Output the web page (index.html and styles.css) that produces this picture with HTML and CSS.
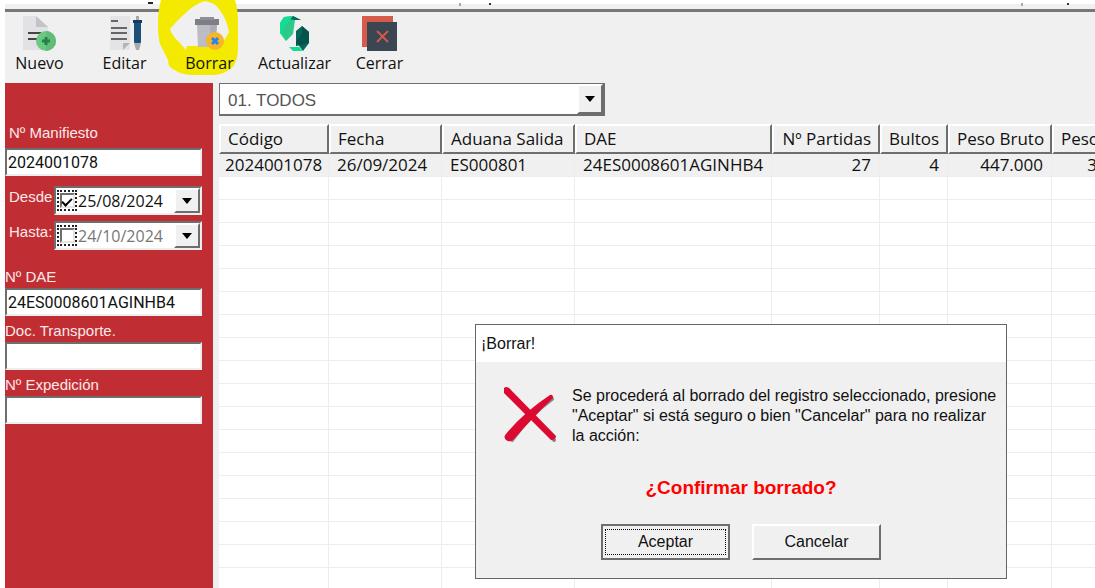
FILE: index.html
```
<!DOCTYPE html>
<html lang="es">
<head>
    <meta charset="UTF-8" />
    <meta name="viewport" content="width=device-width, initial-scale=1.0" />
    <title>Manifiestos</title>
    <link rel="stylesheet" href="styles.css">
</head>
<body>
    <div class="window">
        <svg class="menu-edge" height="9">
            <path d="M143 3h5" stroke="#222" stroke-width="2"/>
            <path d="M455 3v3M1017 3v3" stroke="#aaa" stroke-width="2"/>
            <path d="M485 3v2M1063 3v2" stroke="#334" stroke-width="2"/>
        </svg>

        <nav class="toolbar">
            <button type="button" class="tool">
                <svg width="36" height="36" viewBox="0 0 36 36">
                    <path d="M1 0h13l12 11v23H1z" fill="#e2e2e4"/>
                    <path d="M14 0l12 11H14z" fill="#c3c3c8"/>
                    <path d="M6 17h13M6 23h11" stroke="#444" stroke-width="2"/>
                    <circle cx="24" cy="25" r="10" fill="#6cc983"/>
                    <path d="M24 15a10 10 0 0 1 0 20z" fill="#62bb78"/>
                    <path d="M24 21v8M20 25h8" stroke="#23834a" stroke-width="3"/>
                </svg>
                <span>Nuevo</span>
            </button>
            <button type="button" class="tool">
                <svg width="36" height="36" viewBox="0 0 36 36">
                    <path d="M3 0h20v34H3z" fill="#e4e4e6"/>
                    <path d="M16 27h7l-7 7z" fill="#b4b4b8"/>
                    <path d="M4 5h7M4 12h16M4 17h16M4 23h16" stroke="#666" stroke-width="2"/>
                    <path d="M29 0h3v4h-3zM27 27h7l-2 7h-3z" fill="#aaa"/>
                    <rect x="27" y="4" width="7" height="23" rx="1" fill="#1d5078"/>
                    <path d="M26 4h9v3h-9z" fill="#133c5e"/>
                </svg>
                <span>Editar</span>
            </button>
            <button type="button" class="tool">
                <svg class="marker" width="82" height="78" viewBox="0 0 82 78">
                    <path fill="#f3ea00" d="M4 0H78Q81 10 81 22V48Q81 64 73 69Q66 75 54 75H34Q22 74 18 70Q11 68 11 60L3 44Q1 36 1 24Q1 10 4 0Z"/>
                    <path fill="#f0f0f0" d="M48 1Q41 3 33 9L21 20L13 29Q15 36 22 42L29 50L30 46H60L66 42L71 34L72 32Q70 22 66 15Q60 5 55 3Z"/>
                </svg>
                <svg width="36" height="36" viewBox="0 0 36 36">
                    <path d="M3 3h24v6H3z" fill="#7e7e86"/>
                    <path d="M8 1h14v3H8z" fill="#8e8e96"/>
                    <path d="M5 9h20l-2 22H6z" fill="#bcbcc5"/>
                    <path d="M18 9h7l-2 22h-5z" fill="#adadb7"/>
                    <circle cx="23" cy="25" r="9" fill="#f7b52c"/>
                    <path d="M20 22l6 6M26 22l-6 6" stroke="#2687e8" stroke-width="3"/>
                </svg>
                <span>Borrar</span>
            </button>
            <button type="button" class="tool">
                <svg width="36" height="36" viewBox="0 0 36 36">
                    <path d="M3 7L7 1L16 0L24 4H18L16 18L9 25L3 17Z" fill="#2cc98a"/>
                    <path d="M16 0L24 4H18L12 3Z" fill="#07665a"/>
                    <path d="M3 7L7 1L16 0L5 14L9 25L3 17Z" fill="#13dd95"/>
                    <path d="M25 10L32 16V27L26 35L19 26V15Z" fill="#07665a"/>
                    <path d="M25 10L32 16V27L19 30V26L25 18Z" fill="#04544e"/>
                    <path d="M12 31H22L26 35H16Z" fill="#13dd95"/>
                </svg>
                <span>Actualizar</span>
            </button>
            <button type="button" class="tool">
                <svg width="36" height="36" viewBox="0 0 36 36">
                    <path d="M0 0h31v31H0z" fill="#d65b4b"/>
                    <path d="M5 6h30v29H5z" fill="#3a4652"/>
                    <path d="M15 15l11 11M26 15L15 26" stroke="#cf5a4c" stroke-width="2"/>
                </svg>
                <span>Cerrar</span>
            </button>
        </nav>

        <div class="content">
            <form class="filters">
                <label for="manifiesto" class="inset">Nº Manifiesto</label>
                <input type="text" id="manifiesto" class="field" value="2024001078" />

                <div class="date-row">
                    <label for="desde">Desde</label>
                    <div class="date-box">
                        <span class="tick"><input type="checkbox" aria-label="Usar desde" checked /></span>
                        <input type="text" id="desde" value="25/08/2024" />
                        <button type="button" class="drop" aria-label="Abrir calendario"></button>
                    </div>
                </div>
                <div class="date-row off">
                    <label for="hasta">Hasta:</label>
                    <div class="date-box">
                        <span class="tick"><input type="checkbox" aria-label="Usar hasta" /></span>
                        <input type="text" id="hasta" value="24/10/2024" />
                        <button type="button" class="drop" aria-label="Abrir calendario"></button>
                    </div>
                </div>

                <label for="dae" class="spaced">Nº DAE</label>
                <input type="text" id="dae" class="field" value="24ES0008601AGINHB4" />
                <label for="transporte">Doc. Transporte.</label>
                <input type="text" id="transporte" class="field" />
                <label for="expedicion">Nº Expedición</label>
                <input type="text" id="expedicion" class="field" />
            </form>

            <main class="list">
                <div class="combo">
                    <select aria-label="Estado">
                        <option>01. TODOS</option>
                    </select>
                    <span class="drop"></span>
                </div>

                <div class="grid">
                    <table>
                        <colgroup>
                            <col class="c-codigo"><col class="c-fecha"><col class="c-aduana"><col class="c-dae">
                            <col class="c-partidas"><col class="c-bultos"><col class="c-bruto"><col class="c-neto">
                        </colgroup>
                        <thead>
                            <tr>
                                <th>Código</th>
                                <th>Fecha</th>
                                <th>Aduana Salida</th>
                                <th>DAE</th>
                                <th class="num">Nº Partidas</th>
                                <th class="num">Bultos</th>
                                <th class="num">Peso Bruto</th>
                                <th>Peso Neto</th>
                            </tr>
                        </thead>
                        <tbody id="rows">
                            <tr class="selected">
                                <td>2024001078</td>
                                <td>26/09/2024</td>
                                <td>ES000801</td>
                                <td>24ES0008601AGINHB4</td>
                                <td class="num">27</td>
                                <td class="num">4</td>
                                <td class="num">447.000</td>
                                <td class="num">312.000</td>
                            </tr>
                        </tbody>
                    </table>
                </div>
            </main>
        </div>

        <div class="dialog" role="dialog" aria-labelledby="dialog-title">
            <h2 id="dialog-title">¡Borrar!</h2>
            <div class="message">
                <svg width="56" height="58" viewBox="0 0 56 58">
                    <path d="M7 6L52 54M50 13Q28 29 10 54" stroke="#888" stroke-width="4" stroke-linecap="round" fill="none"/>
                    <path d="M2 2Q5 -1 9 4L54 50Q54 54 49 54L2 7Z" fill="#dc0a32"/>
                    <path d="M48 9Q51 8 51 12Q34 28 12 53Q8 57 4 54Q1 51 4 48Q22 26 48 9Z" fill="#dc0a32"/>
                </svg>
                <p>Se procederá al borrado del registro seleccionado, presione "Aceptar" si está seguro o bien "Cancelar" para no realizar la acción:</p>
            </div>
            <p class="confirm">¿Confirmar borrado?</p>
            <div class="actions">
                <button type="button" class="default"><span>Aceptar</span></button>
                <button type="button"><span>Cancelar</span></button>
            </div>
        </div>
    </div>

    <script>
        // fill the rest of the grid with empty rows
        const rows = document.getElementById("rows");
        for (let i = 0; i < 40; i++) {
            const tr = rows.insertRow();
            for (let c = 0; c < 8; c++) tr.insertCell();
        }
    </script>
</body>
</html>
```
FILE: styles.css
```
:root {
  --face: #f0f0f0;
  --shadow: #6e6e6e;
  --red: #c02e33;
  --line: #ededed;
}

* {
  box-sizing: border-box;
}

body {
  margin: 0;
  background: #fff;
  color: #111;
  font-family: "Liberation Sans", Arial, sans-serif;
  overflow: hidden;
}

.window {
  position: relative;
  height: 100vh;
  margin-left: 5px;
  display: flex;
  flex-direction: column;
  background: var(--face);
}

.menu-edge {
  width: 100%;
  flex: none;
  background: linear-gradient(#fff 4px, #f0f0f0 4px);
}

/* toolbar */
.toolbar {
  height: 74px;
  flex: none;
  display: flex;
  align-items: flex-start;
  border-top: 3px solid #777;
  padding-top: 4px;
}

.tool {
  position: relative;
  width: 85px;
  padding: 0;
  border: 0;
  background: none;
  display: flex;
  flex-direction: column;
  align-items: center;
  font: 16px/22px "Open Sans", sans-serif;
  color: #111;
}

.tool:first-child {
  margin-left: -8px;
}

.tool svg,
.tool span {
  position: relative;
}

/* highlighter stroke behind the delete button */
.tool .marker {
  position: absolute;
  left: -10px;
  top: -16px;
}

.content {
  flex: 1;
  min-height: 0;
  display: flex;
}

/* search filters */
.filters {
  width: 208px;
  flex: none;
  padding-top: 39px;
  background: var(--red);
  color: #fbe9e9;
  font-size: 15px;
}

.filters label {
  display: block;
  line-height: 22px;
}

.filters .inset {
  padding: 0 0 4px 4px;
}

.filters .spaced {
  margin-top: 16px;
}

.field {
  display: block;
  width: 197px;
  height: 28px;
  margin-bottom: 4px;
  padding: 0 1px;
  border: 2px solid;
  border-color: var(--shadow) #eee #eee var(--shadow);
  background: #fff;
  font: 16px Roboto, sans-serif;
  color: #111;
}

.date-row {
  display: flex;
  padding-left: 4px;
  margin-top: 10px;
}

.date-row.off {
  margin-top: 6px;
}

.date-row label {
  width: 45px;
  white-space: nowrap;
}

.date-box {
  display: flex;
  align-items: center;
  width: 148px;
  height: 29px;
  border: 2px solid;
  border-color: var(--shadow) #eee #eee var(--shadow);
  background: #fff;
}

.date-box input[type="text"] {
  flex: 1;
  min-width: 0;
  padding: 0;
  border: 0;
  background: none;
  font: 16px "Open Sans", sans-serif;
  color: #111;
}

.date-row.off input[type="text"] {
  color: #777;
}

.tick {
  display: flex;
  align-items: center;
  justify-content: center;
  width: 20px;
  height: 21px;
  margin: 0 1px;
  border: 2px dotted #222;
}

.tick input {
  appearance: none;
  display: flex;
  align-items: center;
  justify-content: center;
  width: 15px;
  height: 15px;
  margin: 0;
  border: 2px solid;
  border-color: var(--shadow) #e4e4e4 #e4e4e4 var(--shadow);
  background: #fff;
}

.tick input:checked::after {
  content: "";
  width: 8px;
  height: 4px;
  border: 2px solid #000;
  border-width: 0 0 2px 2px;
  transform: rotate(-45deg);
}

.drop {
  width: 26px;
  height: 100%;
  padding: 0;
  border: 2px solid;
  border-color: #fff var(--shadow) var(--shadow) #fff;
  background: var(--face);
  display: flex;
  align-items: center;
  justify-content: center;
}

.drop::after {
  content: "";
  border: 5px solid transparent;
  border-top: 6px solid #000;
  border-bottom: 0;
}

/* list */
.list {
  flex: 1;
  min-width: 0;
  display: flex;
  flex-direction: column;
  padding-left: 6px;
}

.combo {
  display: flex;
  position: relative;
  width: 386px;
  height: 33px;
  border: 2px solid var(--shadow);
  border-width: 1px 2px 2px 1px;
  background: #fff;
}

.combo select {
  appearance: none;
  width: 100%;
  padding: 2px 8px 0;
  border: 0;
  background: #fff;
  font: 17px "Liberation Sans", Arial, sans-serif;
  color: #555;
}

.combo .drop {
  position: absolute;
  right: 0;
  top: 0;
  pointer-events: none;
}

.grid {
  flex: 1;
  min-height: 0;
  margin-top: 8px;
  overflow: hidden;
  background: #fff;
}

.grid table {
  width: 940px;
  table-layout: fixed;
  border-collapse: separate;
  border-spacing: 0;
  font: 17px/20px "Open Sans", sans-serif;
}

.c-codigo { width: 110px; }
.c-fecha { width: 113px; }
.c-aduana { width: 133px; }
.c-dae { width: 197px; }
.c-partidas { width: 108px; }
.c-bultos { width: 68px; }
.c-bruto { width: 104px; }

.grid th {
  height: 30px;
  padding: 0 7px;
  border: 2px solid;
  border-color: #fff var(--shadow) var(--shadow) #fff;
  background: var(--face);
  font-weight: normal;
  text-align: left;
  white-space: nowrap;
}

.grid td {
  height: 23px;
  padding: 0 8px;
  border: 1px solid var(--line);
  border-width: 0 1px 1px 0;
  white-space: nowrap;
}

.grid td:first-child {
  padding: 0 6px;
}

.grid .num {
  text-align: right;
}

.selected td {
  background: var(--face);
}

/* confirmation dialog */
.dialog {
  position: absolute;
  left: 470px;
  top: 324px;
  width: 532px;
  border: 1px solid #666;
  background: var(--face);
}

.dialog h2 {
  margin: 0;
  padding: 0 5px;
  background: #fff;
  font-size: 16px;
  font-weight: normal;
  line-height: 37px;
}

.message {
  display: flex;
  gap: 14px;
  padding: 24px 0 0 26px;
}

.message svg {
  flex: none;
}

.message p {
  width: 428px;
  margin: 0;
  font-size: 16px;
  line-height: 20px;
}

.confirm {
  margin: 30px 0 24px;
  font-size: 19px;
  line-height: 24px;
  font-weight: bold;
  text-align: center;
  color: #f00;
}

.actions {
  display: flex;
  justify-content: center;
  gap: 22px;
  padding-bottom: 18px;
}

.actions button {
  width: 129px;
  height: 36px;
  padding: 3px;
  border: 2px solid;
  border-color: #fff var(--shadow) var(--shadow) #fff;
  background: var(--face);
  font: 16px "Liberation Sans", Arial, sans-serif;
  color: #111;
}

.actions .default {
  border-color: var(--shadow);
}

.actions span {
  display: block;
  line-height: 24px;
}

.actions .default span {
  outline: 1px dotted #000;
}
```
